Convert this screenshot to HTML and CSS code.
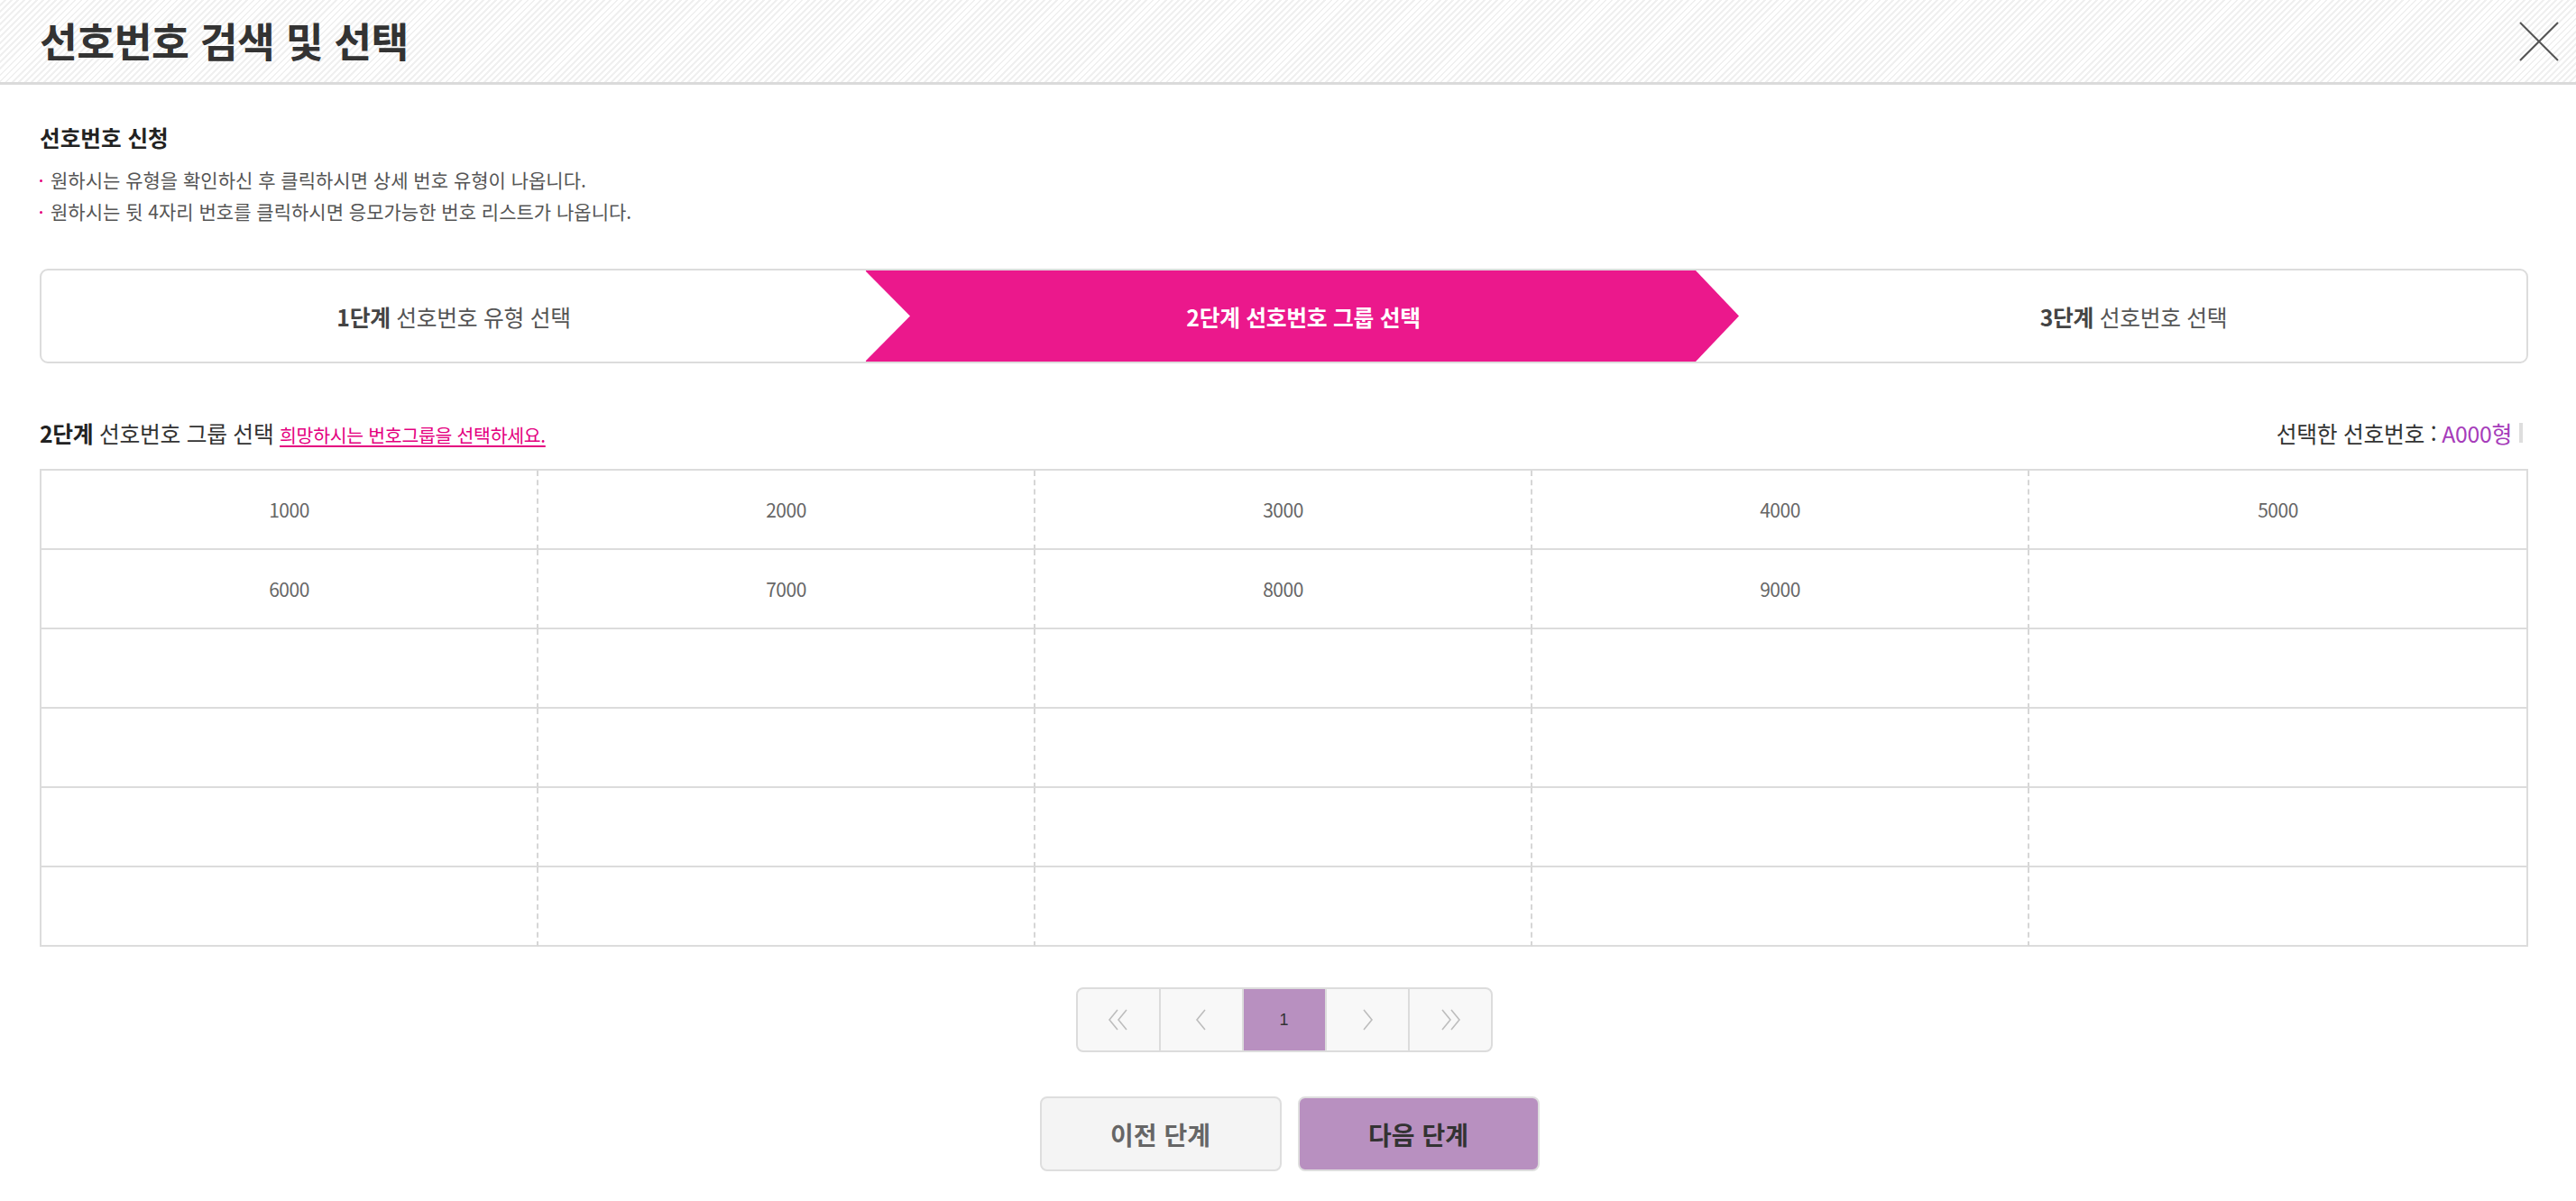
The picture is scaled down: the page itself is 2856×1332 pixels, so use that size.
FILE: index.html
```html
<!DOCTYPE html>
<html lang="ko">
<head>
<meta charset="utf-8">
<title>선호번호 검색 및 선택</title>
<link rel="stylesheet" href="styles.css">
</head>
<body>
<header class="pop-head">
  <h1 class="pop-title">선호번호 검색 및 선택</h1>
  <button class="close-btn" type="button" aria-label="닫기">
    <svg width="46" height="46" viewBox="0 0 46 46"><path d="M2 2 L44 44 M44 2 L2 44" stroke="#555" stroke-width="2" fill="none"/></svg>
  </button>
</header>
<main class="pop-body">
  <h2 class="sec-title">선호번호 신청</h2>
  <ul class="guide">
    <li>원하시는 유형을 확인하신 후 클릭하시면 상세 번호 유형이 나옵니다.</li>
    <li>원하시는 뒷 4자리 번호를 클릭하시면 응모가능한 번호 리스트가 나옵니다.</li>
  </ul>
  <ol class="steps">
    <li class="step"><span><b>1단계</b> 선호번호 유형 선택</span></li>
    <li class="step active"><span><b>2단계 선호번호 그룹 선택</b></span></li>
    <li class="step"><span><b>3단계</b> 선호번호 선택</span></li>
  </ol>
  <div class="group-head">
    <p class="group-title"><b>2단계</b> 선호번호 그룹 선택 <a href="#" class="hint">희망하시는 번호그룹을 선택하세요.</a></p>
    <p class="picked">선택한 선호번호 : <span class="picked-val">A000형</span><span class="bar"></span></p>
  </div>
  <div class="grid">
    <div class="cell">1000</div><div class="cell">2000</div><div class="cell">3000</div><div class="cell">4000</div><div class="cell">5000</div>
    <div class="cell">6000</div><div class="cell">7000</div><div class="cell">8000</div><div class="cell">9000</div><div class="cell"></div>
    <div class="cell"></div><div class="cell"></div><div class="cell"></div><div class="cell"></div><div class="cell"></div>
    <div class="cell"></div><div class="cell"></div><div class="cell"></div><div class="cell"></div><div class="cell"></div>
    <div class="cell"></div><div class="cell"></div><div class="cell"></div><div class="cell"></div><div class="cell"></div>
    <div class="cell"></div><div class="cell"></div><div class="cell"></div><div class="cell"></div><div class="cell"></div>
  </div>
  <nav class="paging">
    <a href="#" class="pg" aria-label="처음"><svg width="26" height="26" viewBox="0 0 26 26"><path d="M12 2 L3 13 L12 24 M22 2 L13 13 L22 24" stroke="#bdbdbd" stroke-width="1.6" fill="none"/></svg></a>
    <a href="#" class="pg" aria-label="이전"><svg width="16" height="26" viewBox="0 0 16 26"><path d="M12 2 L3 13 L12 24" stroke="#bdbdbd" stroke-width="1.6" fill="none"/></svg></a>
    <a href="#" class="pg on">1</a>
    <a href="#" class="pg" aria-label="다음"><svg width="16" height="26" viewBox="0 0 16 26"><path d="M4 2 L13 13 L4 24" stroke="#bdbdbd" stroke-width="1.6" fill="none"/></svg></a>
    <a href="#" class="pg" aria-label="마지막"><svg width="26" height="26" viewBox="0 0 26 26"><path d="M4 2 L13 13 L4 24 M14 2 L23 13 L14 24" stroke="#bdbdbd" stroke-width="1.6" fill="none"/></svg></a>
  </nav>
  <div class="btns">
    <button type="button" class="btn prev">이전 단계</button>
    <button type="button" class="btn next">다음 단계</button>
  </div>
</main>
</body>
</html>
```
FILE: styles.css
```css
* { box-sizing: border-box; }
html, body { margin: 0; padding: 0; background: #fff; }
body {
  font-family: "Noto Sans CJK KR", "Noto Sans", sans-serif;
  color: #333;
}
ul, ol, p, h1, h2 { margin: 0; padding: 0; list-style: none; }
a { text-decoration: none; }

.pop-head {
  height: 94px;
  display: flex;
  align-items: center;
  justify-content: space-between;
  padding: 0 18px 0 44px;
  border-bottom: 3px solid #dadada;
  background: repeating-linear-gradient(135deg, #ffffff 0, #ffffff 3px, #f0f0f0 3px, #f0f0f0 5px);
}
.pop-title {
  font-size: 45.5px;
  font-weight: 700;
  color: #333;
  line-height: 1;
  letter-spacing: -0.5px;
  margin-top: -2px;
}
.close-btn {
  border: 0;
  background: transparent;
  padding: 0;
  width: 46px;
  height: 46px;
  display: flex;
  cursor: pointer;
}

.pop-body { padding: 0 53px 0 44px; }

.sec-title {
  margin-top: 42px;
  font-size: 24.6px;
  line-height: 32px;
  font-weight: 700;
  color: #222;
}
.guide { margin-top: 14px; }
.guide li {
  position: relative;
  padding-left: 12px;
  font-size: 21px;
  line-height: 35px;
  color: #555;
}
.guide li::before {
  content: "";
  position: absolute;
  left: 0;
  top: 17px;
  width: 3px;
  height: 3px;
  border-radius: 50%;
  background: #e4007f;
}

.steps {
  margin-top: 46px;
  height: 105px;
  display: grid;
  grid-template-columns: 914fr 920fr 921fr;
  border: 2px solid #dcdcdc;
  border-radius: 9px;
  overflow: hidden;
}
.step {
  display: flex;
  align-items: center;
  justify-content: center;
  font-size: 24.8px;
  color: #555;
  letter-spacing: -0.3px;
}
.step b { color: #444; font-weight: 700; }
.step + .step { padding-left: 50px; }
.step.active {
  position: relative;
  background: #eb188c;
  color: #fff;
}
.step.active b { color: #fff; }
.step.active::before {
  content: "";
  position: absolute;
  left: -1px;
  top: 0;
  width: 50px;
  height: 100%;
  background: #fff;
  clip-path: polygon(0 0, 100% 50%, 0 100%);
}
.step.active::after {
  content: "";
  position: absolute;
  left: 100%;
  top: 0;
  width: 48px;
  height: 100%;
  background: #eb188c;
  clip-path: polygon(0 0, 100% 50%, 0 100%);
  z-index: 1;
}

.group-head {
  margin-top: 61px;
  display: flex;
  align-items: baseline;
  justify-content: space-between;
  font-size: 24.8px;
  line-height: 32px;
}
.group-title { color: #333; letter-spacing: -0.3px; }
.group-title b { color: #222; }
.hint {
  font-size: 20.5px;
  color: #e4007f;
  text-decoration: underline;
  text-underline-offset: 3px;
  letter-spacing: -0.3px;
}
.picked { color: #333; display: flex; align-items: center; letter-spacing: -0.3px; margin-right: 6px; }
.picked-val { color: #a63cba; margin-left: 6px; }
.bar {
  display: inline-block;
  width: 4px;
  height: 22px;
  background: #dedede;
  margin-left: 8px;
}

.grid {
  margin-top: 22px;
  display: grid;
  grid-template-columns: repeat(5, 1fr);
  border: 2px solid #dcdcdc;
  border-bottom: 0;
}
.cell {
  height: 88px;
  display: flex;
  align-items: center;
  justify-content: center;
  border-bottom: 2px solid #dcdcdc;
  border-right: 2px dashed #d6d6d6;
  font-family: "Noto Sans CJK KR", "Noto Sans", sans-serif;
  font-size: 21px;
  color: #666;
  letter-spacing: -0.5px;
}
.cell:nth-child(5n) { border-right: 0; }

.paging {
  margin: 45px auto 0;
  width: 462px;
  height: 72px;
  display: flex;
  border: 2px solid #dcdcdc;
  border-radius: 8px;
  overflow: hidden;
  background: #f8f8f8;
}
.pg {
  flex: 1;
  display: flex;
  align-items: center;
  justify-content: center;
  font-family: "Liberation Sans", "Noto Sans", sans-serif;
  font-size: 18px;
  color: #333;
}
.pg + .pg { border-left: 2px solid #dcdcdc; }
.pg.on { background: #b890c0; }

.btns {
  margin-top: 49px;
  margin-left: 12px;
  display: flex;
  justify-content: center;
  gap: 18px;
  padding-bottom: 30px;
}
.btn {
  width: 268px;
  height: 83px;
  border: 2px solid #dedede;
  border-radius: 8px;
  font-family: "Noto Sans CJK KR", "Noto Sans", sans-serif;
  font-size: 28px;
  font-weight: 700;
  cursor: pointer;
}
.btn.prev { background: #f4f4f4; color: #666; }
.btn.next { background: #b890c0; color: #333; }
```
